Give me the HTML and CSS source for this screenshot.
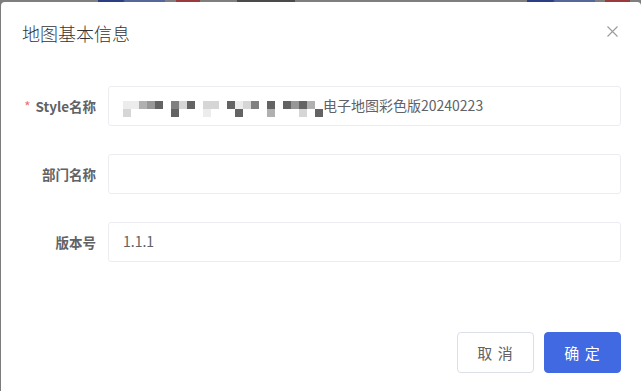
FILE: index.html
```html
<!DOCTYPE html>
<html lang="zh-CN">
<head>
<meta charset="utf-8">
<title>地图基本信息</title>
<link rel="stylesheet" href="styles.css">
</head>
<body>
<div class="backdrop">
  <div class="dialog">
    <div class="dialog-header">
      <span class="dialog-title">地图基本信息</span>
      <button class="close-btn" aria-label="关闭">
        <svg width="11" height="11" viewBox="0 0 11 11"><path d="M0.5 0.5 L10.5 10.5 M10.5 0.5 L0.5 10.5" stroke="#9a9a9a" stroke-width="1.1" fill="none"/></svg>
      </button>
    </div>
    <form class="form">
      <div class="form-row">
        <label class="form-label"><span class="req">*</span>Style名称</label>
        <div class="input">
          <span class="mosaic">
            <i class="m1"></i><i class="m1"></i><i class="m3"></i><i class="m4"></i><i class="m6"></i><i></i><i class="m5"></i><i class="m2"></i><i class="m6"></i><i></i><i class="m2"></i><i class="m2"></i><i></i><i class="m6"></i><i class="m1"></i><i class="m2"></i><i class="m5"></i><i></i><i class="m6"></i><i></i><i class="m6"></i><i class="m4"></i><i class="m6"></i><i class="m3"></i><i></i>
            <i class="m2"></i><i></i><i></i><i></i><i></i><i></i><i class="m6"></i><i></i><i></i><i></i><i class="m1"></i><i></i><i></i><i></i><i class="m6"></i><i></i><i></i><i></i><i class="m3"></i><i></i><i></i><i></i><i class="m2"></i><i></i><i class="m6"></i>
          </span><span class="value">电子地图彩色版20240223</span>
        </div>
      </div>
      <div class="form-row">
        <label class="form-label">部门名称</label>
        <div class="input"></div>
      </div>
      <div class="form-row">
        <label class="form-label">版本号</label>
        <div class="input"><span class="value">1.1.1</span></div>
      </div>
    </form>
    <div class="dialog-footer">
      <button type="button" class="btn btn-default">取 消</button>
      <button type="button" class="btn btn-primary">确 定</button>
    </div>
  </div>
</div>
</body>
</html>
```

FILE: styles.css
```css
html, body {
  margin: 0;
  padding: 0;
  width: 641px;
  height: 391px;
  overflow: hidden;
}

body {
  font-family: "Noto Sans CJK SC", "Noto Sans", sans-serif;
  background:
    linear-gradient(90deg,
      #7f7f7f 0, #7f7f7f 98px,
      #2b3d85 98px, #2b3d85 123px,
      #56669a 125px, #56669a 165px,
      #7f7f7f 165px, #7f7f7f 176px,
      #9b3a3a 176px, #9b3a3a 200px,
      #7f7f7f 200px, #7f7f7f 237px,
      #4a4a4a 237px, #4a4a4a 295px,
      #7f7f7f 295px, #7f7f7f 527px,
      #2b3d85 527px, #2b3d85 553px,
      #56669a 555px, #56669a 595px,
      #7f7f7f 595px, #7f7f7f 605px,
      #9b3a3a 605px, #9b3a3a 630px,
      #7f7f7f 630px) top left / 100% 2px no-repeat,
    #7c7c7c;
}

.backdrop {
  padding: 2px 0 0 1px;
}

.dialog {
  width: 640px;
  height: 400px;
  background: #fff;
  border-radius: 4px 4px 0 0;
  box-sizing: border-box;
  padding: 0 20px 0 21px;
}

.dialog-header {
  display: flex;
  align-items: center;
  justify-content: space-between;
  padding-top: 19px;
  height: 24px;
}

.dialog-title {
  font-size: 18px;
  line-height: 24px;
  color: #333;
  font-weight: 300;
}

.close-btn {
  border: 0;
  background: none;
  padding: 0;
  margin-right: 3px;
  margin-top: -4px;
  width: 11px;
  height: 11px;
  display: flex;
}

.form {
  margin-top: 41px;
  display: flex;
  flex-direction: column;
  gap: 28px;
}

.form-row {
  display: flex;
  align-items: center;
  gap: 12px;
}

.form-label {
  width: 74px;
  text-align: right;
  font-size: 13.5px;
  font-weight: 700;
  color: #606266;
  white-space: nowrap;
}

.req {
  color: #f56c6c;
  font-weight: 400;
  margin-right: 5px;
}

.input {
  flex: 1;
  height: 40px;
  box-sizing: border-box;
  border: 1px solid #ebedf0;
  border-radius: 3px;
  display: flex;
  align-items: center;
  padding: 0 16px 0 14px;
  font-size: 14px;
  color: #606266;
}

.value {
  line-height: 20px;
  margin-top: -2px;
}

.mosaic {
  display: grid;
  grid-template-columns: repeat(25, 8px);
  grid-auto-rows: 8px;
  margin-top: 6px;
}

.mosaic i { display: block; }
.mosaic .m1 { background: #ececec; }
.mosaic .m2 { background: #d6d6d6; }
.mosaic .m3 { background: #b0b0b0; }
.mosaic .m4 { background: #979797; }
.mosaic .m5 { background: #808080; }
.mosaic .m6 { background: #636363; }

.dialog-footer {
  display: flex;
  justify-content: flex-end;
  gap: 10px;
  margin-top: 70px;
}

.btn {
  width: 77px;
  height: 41px;
  border-radius: 4px;
  font-family: "Noto Sans CJK SC", sans-serif;
  font-size: 15px;
  letter-spacing: 1px;
  cursor: pointer;
}

.btn-default {
  background: #fff;
  border: 1px solid #dcdfe6;
  color: #606266;
}

.btn-primary {
  background: #4169e1;
  border: 1px solid #4169e1;
  color: #fff;
}
```
